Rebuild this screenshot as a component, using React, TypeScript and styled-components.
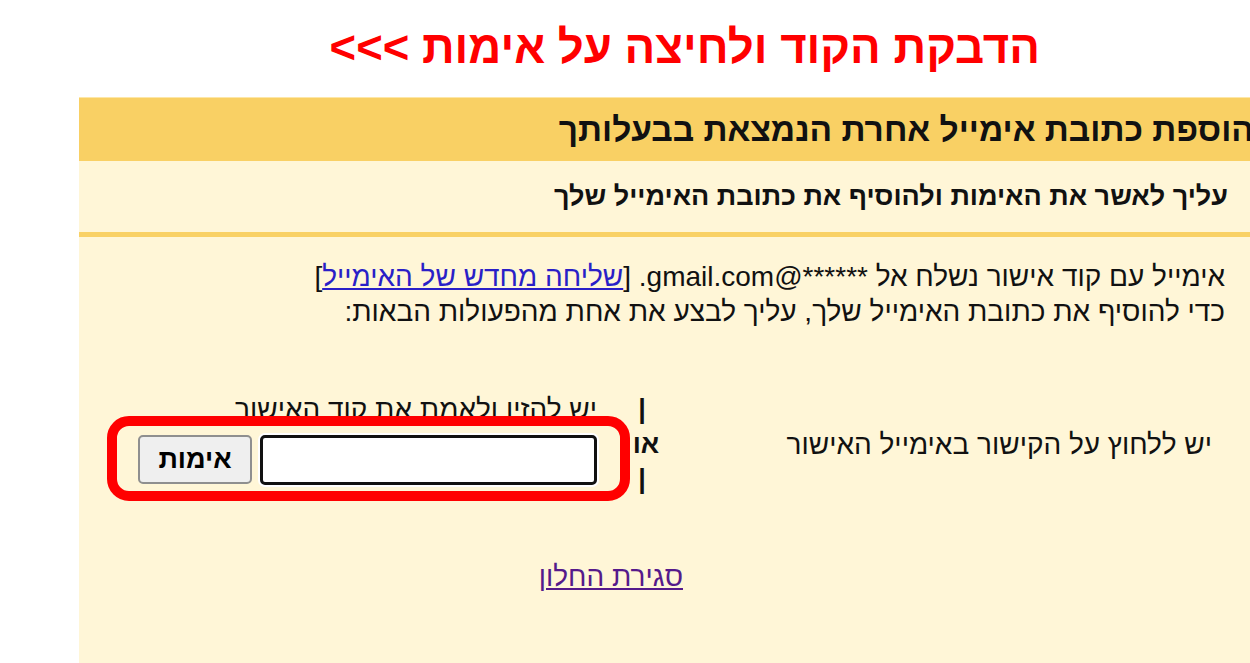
import styled, { createGlobalStyle } from "styled-components";

const GlobalStyle = createGlobalStyle`
	html, body {
		margin: 0;
		padding: 0;
		background: #ffffff;
		overflow: hidden;
	}
	body {
		font-family: "Liberation Sans", Arial, "Noto Sans", sans-serif;
		color: #111;
	}
`;

const Page = styled.div`
	direction: rtl;
	width: 1250px;
	height: 663px;
	overflow: hidden;
`;

const Title = styled.h1`
	box-sizing: border-box;
	height: 97px;
	margin: 0;
	padding: 22px 210px 0 0;
	font-size: 45.5px;
	line-height: 52px;
	font-weight: bold;
	color: #ff0000;
	text-align: right;
	white-space: nowrap;
`;

const Panel = styled.section`
	margin-left: 79px;
	margin-right: -10px;
	width: 1181px;
	height: 566px;
	background: #fff6d7;
	border-top: 1px solid #fde7a8;
`;

const Header = styled.h2`
	box-sizing: border-box;
	display: flex;
	align-items: center;
	height: 63px;
	margin: 0;
	padding-right: 6px;
	background: #f9d064;
	font-size: 33.5px;
	font-weight: bold;
	white-space: nowrap;
`;

const SubHeader = styled.h3`
	box-sizing: border-box;
	display: flex;
	align-items: center;
	height: 76px;
	margin: 0;
	padding-right: 32px;
	font-size: 27px;
	font-weight: bold;
	border-bottom: 5px solid #f9d165;
`;

const Body = styled.div`
	padding: 22px 35px 0 0;
`;

const Intro = styled.p`
	margin: 0;
	font-size: 28px;
	line-height: 35px;
`;

const ResendLink = styled.a`
	color: #2a1fc7;
	text-decoration: underline;
`;

const Options = styled.div`
	display: grid;
	grid-template-columns: 573px 20px 494px;
	margin-top: 63px;
`;

const LinkOption = styled.div`
	display: flex;
	align-items: center;
	padding-right: 13px;
	font-size: 28px;
`;

const Divider = styled.div`
	display: flex;
	flex-direction: column;
	align-items: center;
	font-size: 27px;
	line-height: 35px;
	font-weight: bold;
	white-space: nowrap;
`;

const OrWord = styled.span`
	margin-left: 8px;
`;

const CodeOption = styled.div`
	position: relative;
	box-sizing: border-box;
	display: flex;
	flex-direction: column;
	align-items: flex-start;
	padding-right: 35px;
`;

const CodeLabel = styled.div`
	font-size: 28px;
	line-height: 35px;
`;

const FormRow = styled.div`
	display: flex;
	gap: 8px;
	margin-top: 8px;
`;

const CodeInput = styled.input`
	box-sizing: border-box;
	width: 337px;
	height: 50px;
	border: 3px solid #111;
	border-radius: 5px;
	background: #ffffff;
	box-shadow: 0 0 0 2px #ffffff;
	outline: none;
`;

const VerifyButton = styled.button`
	box-sizing: border-box;
	width: 114px;
	height: 49px;
	padding: 0;
	background: #efefef;
	border: 2px solid #8f8f8f;
	border-radius: 5px;
	font-family: inherit;
	font-size: 27px;
	font-weight: bold;
	color: #000;
`;

const Highlight = styled.div`
	position: absolute;
	top: 24px;
	left: -31px;
	right: 2px;
	height: 85px;
	box-sizing: border-box;
	border: 10px solid #ff0000;
	border-radius: 22px;
	pointer-events: none;
`;

const CloseRow = styled.div`
	margin-top: 62px;
	padding-right: 542px;
	font-size: 28px;
	line-height: 35px;
`;

const CloseLink = styled.a`
	color: #551a8b;
	text-decoration: underline;
`;

const App = () => {
	return (
		<Page>
			<GlobalStyle />
			<Title>{"הדבקת הקוד ולחיצה על אימות >>>"}</Title>
			<Panel>
				<Header>הוספת כתובת אימייל אחרת הנמצאת בבעלותך</Header>
				<SubHeader>עליך לאשר את האימות ולהוסיף את כתובת האימייל שלך</SubHeader>
				<Body>
					<Intro>
						אימייל עם קוד אישור נשלח אל ******@gmail.com. [
						<ResendLink href="#">שליחה מחדש של האימייל</ResendLink>]
						<br />
						כדי להוסיף את כתובת האימייל שלך, עליך לבצע את אחת מהפעולות הבאות:
					</Intro>
					<Options>
						<LinkOption>יש ללחוץ על הקישור באימייל האישור</LinkOption>
						<Divider>
							<span>|</span>
							<OrWord>או</OrWord>
							<span>|</span>
						</Divider>
						<CodeOption>
							<CodeLabel>יש להזין ולאמת את קוד האישור</CodeLabel>
							<FormRow>
								<CodeInput type="text" />
								<VerifyButton>אימות</VerifyButton>
							</FormRow>
							<Highlight />
						</CodeOption>
					</Options>
					<CloseRow>
						<CloseLink href="#">סגירת החלון</CloseLink>
					</CloseRow>
				</Body>
			</Panel>
		</Page>
	);
};

export default App;
